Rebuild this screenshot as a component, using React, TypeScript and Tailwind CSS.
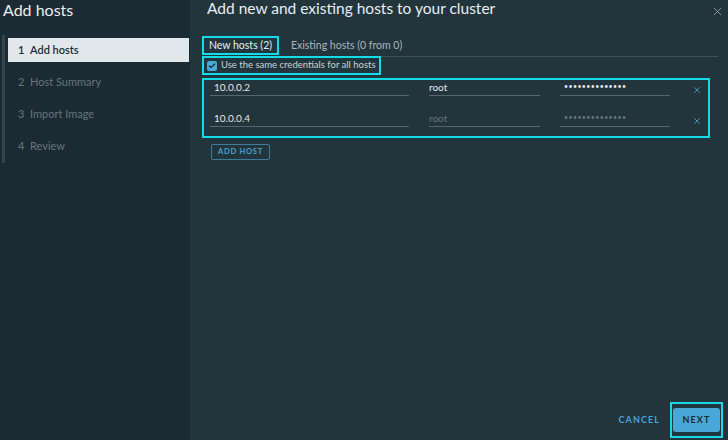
import { Check, X } from "lucide-react";

const steps = ["Add hosts", "Host Summary", "Import Image", "Review"];

const hosts = [
  { ip: "10.0.0.2", user: "root", pw: "••••••••••••••", shared: false },
  { ip: "10.0.0.4", user: "root", pw: "••••••••••••••", shared: true },
];

function HostRow({ ip, user, pw, shared }: { ip: string; user: string; pw: string; shared: boolean }) {
  return (
    <div className="flex items-end h-[16px]">
      <div className="ml-[6px] w-[199px] h-full border-b border-[#55666d] pl-[4px] text-[10px] leading-[14px] text-[#e3e9ec]">
        {ip}
      </div>
      <div
        className={`ml-[20px] w-[111px] h-full border-b border-[#55666d] text-[10px] leading-[14px] ${
          shared ? "text-[#66767d]" : "text-[#e3e9ec]"
        }`}
      >
        {user}
      </div>
      <div
        className={`ml-[20px] w-[110px] h-full border-b border-[#55666d] pl-[4px] text-[7px] leading-[12px] tracking-[0.4px] ${
          shared ? "text-[#66767d]" : "text-[#e3e9ec]"
        }`}
      >
        {pw}
      </div>
      <div className="ml-[22px] self-start mt-[5px] text-[#4aa3cf]">
        <X size={10} strokeWidth={2} />
      </div>
    </div>
  );
}

export default function App() {
  return (
    <div
      className="w-[728px] h-[440px] flex overflow-hidden"
      style={{ fontFamily: "Lato, 'Noto Sans', sans-serif" }}
    >
      {/* wizard steps */}
      <aside className="w-[190px] shrink-0 bg-[#1c2a33] flex flex-col">
        <h1 className="pl-[3px] pt-[1px] h-[35px] text-[16px] leading-[18px] text-[#e8eef1]">Add hosts</h1>
        <div className="ml-[2px] border-l-[3px] border-[#34454d] pt-[3px] pb-[5px] pl-[3px] flex flex-col gap-[8px]">
          {steps.map((s, i) => (
            <div
              key={s}
              className={`h-[24px] mr-[1px] flex items-center pl-[10px] text-[11px] ${
                i === 0 ? "bg-[#e1e8ec] text-[#1c2a33] font-semibold" : "text-[#66767e]"
              }`}
            >
              <span className="w-[12px]">{i + 1}</span>
              <span>{s}</span>
            </div>
          ))}
        </div>
      </aside>

      {/* main panel */}
      <main className="flex-1 bg-[#22343c] flex flex-col">
        <div className="flex items-start justify-between h-[35px]">
          <h2 className="pl-[17px] text-[15.5px] leading-[18px] -mt-[1px] text-[#e8eef1]">
            Add new and existing hosts to your cluster
          </h2>
          <button className="mt-[5px] mr-[4px] text-[#9aa8ae]">
            <X size={13} strokeWidth={1.5} />
          </button>
        </div>

        <div className="ml-[12px] mr-[10px] flex items-start border-b border-[#3e5058] h-[22px] pt-[1px]">
          <div className="h-[19px] w-[77px] border-2 border-[#14dbe8] flex items-center justify-center text-[10.5px] text-[#e8eef1] whitespace-nowrap">
            New hosts (2)
          </div>
          <div className="ml-[12px] mt-[2px] text-[10.5px] text-[#aab6bb] whitespace-nowrap">Existing hosts (0 from 0)</div>
        </div>

        <div className="ml-[12px] w-[179px] h-[19px] -mt-[1px] border-2 border-[#14dbe8] flex items-center gap-[4px] pl-[3px] text-[9.5px] text-[#c9d3d7] whitespace-nowrap">
          <span className="w-[10px] h-[10px] shrink-0 rounded-[2px] bg-[#49a9d8] flex items-center justify-center text-[#14232b]">
            <Check size={8} strokeWidth={3.5} />
          </span>
          Use the same credentials for all hosts
        </div>

        <div className="ml-[12px] mt-[3px] w-[508px] border-2 border-[#14dbe8] flex flex-col gap-[15px] pb-[9px]">
          {hosts.map((h) => (
            <HostRow key={h.ip} {...h} />
          ))}
        </div>

        <button className="ml-[21px] mt-[6px] w-[59px] h-[16px] border border-[#3f7d9c] rounded-[2px] text-[7.5px] font-bold tracking-[0.1em] text-[#4aa3cf]">
          ADD HOST
        </button>

        <div className="mt-auto mb-[2px] mr-[5px] flex items-center justify-end">
          <button className="mr-[10px] text-[9px] font-bold tracking-[0.12em] text-[#4aa6d6]">CANCEL</button>
          <div className="w-[53px] h-[36px] border-2 border-[#14dbe8] flex items-center justify-center">
            <button className="w-[47px] h-[24px] rounded-[3px] bg-[#49a8d8] text-[9px] font-bold tracking-[0.12em] text-[#1c2a33]">
              NEXT
            </button>
          </div>
        </div>
      </main>
    </div>
  );
}
